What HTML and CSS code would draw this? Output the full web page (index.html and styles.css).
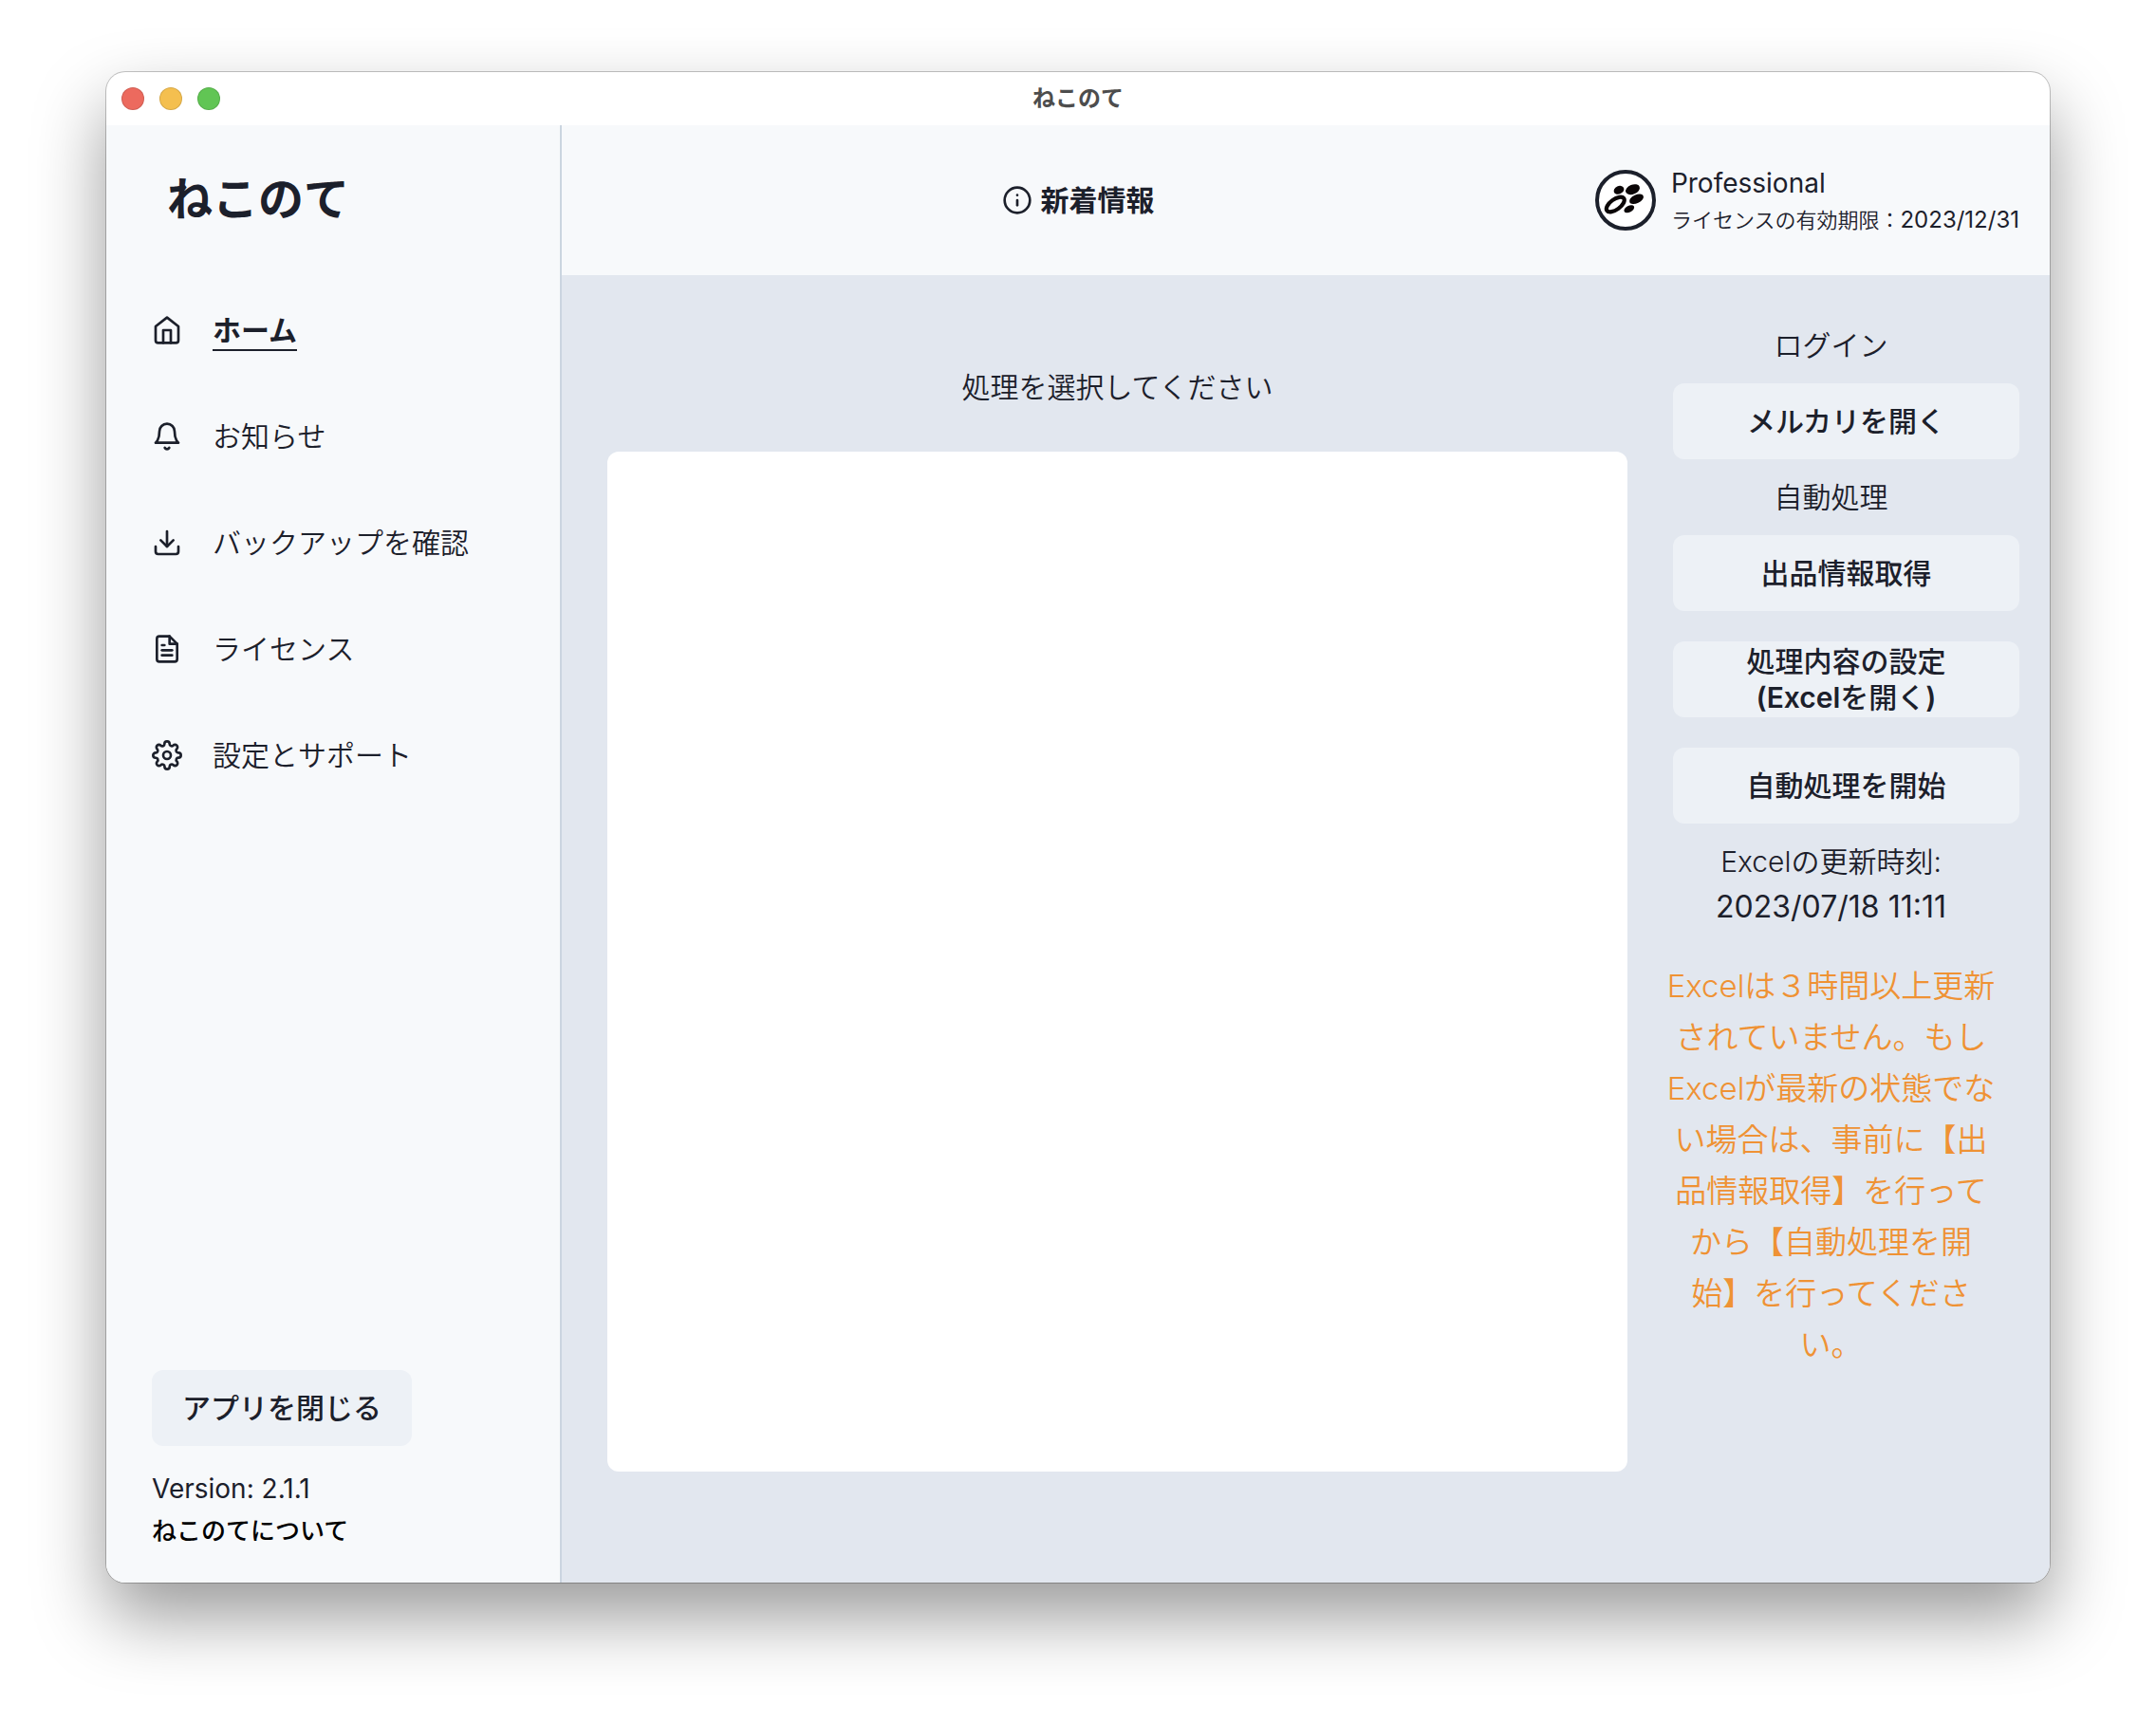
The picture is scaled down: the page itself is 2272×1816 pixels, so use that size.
FILE: index.html
```html
<!DOCTYPE html>
<html lang="ja">
<head>
  <meta charset="utf-8">
  <title>ねこのて</title>
  <link rel="stylesheet" href="styles.css">
</head>
<body>
  <div class="window">
    <div class="titlebar">
      <div class="lights">
        <span class="light light-close"></span>
        <span class="light light-minimize"></span>
        <span class="light light-zoom"></span>
      </div>
      <div class="titlebar-title">ねこのて</div>
    </div>
    <div class="app">
      <div class="sidebar">
        <h1 class="brand">ねこのて</h1>
        <nav class="nav">
          <a class="nav-item nav-item-active" href="#home">
            <svg class="icon" viewBox="0 0 24 24"><path d="M3 9l9-7 9 7v11a2 2 0 0 1-2 2H5a2 2 0 0 1-2-2z"/><path d="M9 22V12h6v10"/></svg>
            <span class="nav-label">ホーム</span>
          </a>
          <a class="nav-item" href="#news">
            <svg class="icon" viewBox="0 0 24 24"><path d="M18 8A6 6 0 0 0 6 8c0 7-3 9-3 9h18s-3-2-3-9"/><path d="M13.73 21a2 2 0 0 1-3.46 0"/></svg>
            <span class="nav-label">お知らせ</span>
          </a>
          <a class="nav-item" href="#backup">
            <svg class="icon" viewBox="0 0 24 24"><path d="M21 15v4a2 2 0 0 1-2 2H5a2 2 0 0 1-2-2v-4"/><path d="M7 10l5 5 5-5"/><path d="M12 15V3"/></svg>
            <span class="nav-label">バックアップを確認</span>
          </a>
          <a class="nav-item" href="#license">
            <svg class="icon" viewBox="0 0 24 24"><path d="M14 2H6a2 2 0 0 0-2 2v16a2 2 0 0 0 2 2h12a2 2 0 0 0 2-2V8z"/><path d="M14 2v6h6"/><path d="M16 13H8"/><path d="M16 17H8"/><path d="M10 9H8"/></svg>
            <span class="nav-label">ライセンス</span>
          </a>
          <a class="nav-item" href="#settings">
            <svg class="icon" viewBox="0 0 24 24"><circle cx="12" cy="12" r="3"/><path d="M19.4 15a1.65 1.65 0 0 0 .33 1.82l.06.06a2 2 0 0 1 0 2.83 2 2 0 0 1-2.83 0l-.06-.06a1.65 1.65 0 0 0-1.82-.33 1.65 1.65 0 0 0-1 1.51V21a2 2 0 0 1-2 2 2 2 0 0 1-2-2v-.09A1.65 1.65 0 0 0 9 19.4a1.65 1.65 0 0 0-1.82.33l-.06.06a2 2 0 0 1-2.83 0 2 2 0 0 1 0-2.83l.06-.06a1.65 1.65 0 0 0 .33-1.82 1.65 1.65 0 0 0-1.51-1H3a2 2 0 0 1-2-2 2 2 0 0 1 2-2h.09A1.65 1.65 0 0 0 4.6 9a1.65 1.65 0 0 0-.33-1.82l-.06-.06a2 2 0 0 1 0-2.83 2 2 0 0 1 2.83 0l.06.06a1.65 1.65 0 0 0 1.82.33H9a1.65 1.65 0 0 0 1-1.51V3a2 2 0 0 1 2-2 2 2 0 0 1 2 2v.09a1.65 1.65 0 0 0 1 1.51 1.65 1.65 0 0 0 1.82-.33l.06-.06a2 2 0 0 1 2.83 0 2 2 0 0 1 0 2.83l-.06.06a1.65 1.65 0 0 0-.33 1.82V9a1.65 1.65 0 0 0 1.51 1H21a2 2 0 0 1 2 2 2 2 0 0 1-2 2h-.09a1.65 1.65 0 0 0-1.51 1z"/></svg>
            <span class="nav-label">設定とサポート</span>
          </a>
        </nav>
        <div class="sidebar-footer">
          <button class="button button-quit" type="button">アプリを閉じる</button>
          <p class="version">Version: 2.1.1</p>
          <a class="about" href="#about">ねこのてについて</a>
        </div>
      </div>
      <div class="content">
        <header class="header">
          <div class="header-center">
            <button class="info" type="button">
              <svg class="icon" viewBox="0 0 24 24"><circle cx="12" cy="12" r="10"/><path d="M12 16v-4"/><path d="M12 8h.01"/></svg>
              <span>新着情報</span>
            </button>
          </div>
          <div class="account">
            <svg class="avatar" viewBox="0 0 64 64">
              <circle cx="32" cy="32" r="30" fill="#fff" stroke="#1c202b" stroke-width="4"/>
              <g fill="#0b0607">
                <ellipse cx="25" cy="21.3" rx="5.6" ry="4.2" transform="rotate(-25 25 21.3)"/>
                <ellipse cx="39.5" cy="20.7" rx="7.8" ry="5" transform="rotate(-22 39.5 20.7)"/>
                <ellipse cx="43.5" cy="30.8" rx="8" ry="4.4" transform="rotate(-25 43.5 30.8)"/>
                <ellipse cx="35.8" cy="41.3" rx="5.8" ry="3.4" transform="rotate(-28 35.8 41.3)"/>
              </g>
              <ellipse cx="21.3" cy="36.5" rx="11" ry="5.4" fill="#fff" stroke="#0b0607" stroke-width="4.2" transform="rotate(-36 21.3 36.5)"/>
            </svg>
            <div class="account-text">
              <p class="plan">Professional</p>
              <p class="expiry">ライセンスの有効期限：<span class="expiry-date">2023/12/31</span></p>
            </div>
          </div>
        </header>
        <main class="main">
          <section class="stage">
            <p class="prompt">処理を選択してください</p>
            <div class="panel"></div>
          </section>
          <aside class="actions">
            <p class="caption">ログイン</p>
            <button class="button" type="button">メルカリを開く</button>
            <p class="caption">自動処理</p>
            <div class="button-group">
              <button class="button" type="button">出品情報取得</button>
              <button class="button" type="button">処理内容の設定<br><span class="strong">(Excel</span>を開く<span class="strong">)</span></button>
              <button class="button" type="button">自動処理を開始</button>
            </div>
            <div class="caption">
              <p>Excelの更新時刻:</p>
              <p class="updated">2023/07/18 11:11</p>
            </div>
            <p class="warning">Excelは３時間以上更新されていません。もしExcelが最新の状態でない場合は、事前に【出品情報取得】を行ってから【自動処理を開始】を行ってください。</p>
          </aside>
        </main>
      </div>
    </div>
  </div>
</body>
</html>
```
FILE: styles.css
```css
* {
  box-sizing: border-box;
}

body {
  display: flex;
  min-height: 100vh;
  margin: 0;
  padding: 76px 112px 148px;
  background: #fff;
  color: #1c202b;
  font-family: Inter, "Noto Sans CJK JP", sans-serif;
  font-size: 30px;
  font-weight: 350;
  line-height: 48px;
}

p,
h1 {
  margin: 0;
}

a {
  color: inherit;
  text-decoration: none;
}

button {
  border: 0;
  color: inherit;
  font: inherit;
  cursor: pointer;
}

.window {
  display: flex;
  flex: 1;
  flex-direction: column;
  min-width: 0;
  overflow: hidden;
  border-radius: 20px;
  background: #fff;
  box-shadow: 0 0 0 1px rgba(0, 0, 0, 0.22), 0 36px 76px rgba(0, 0, 0, 0.4);
}

.titlebar {
  display: grid;
  grid-template-columns: 1fr auto 1fr;
  align-items: center;
  height: 56px;
  padding: 0 16px;
}

.lights {
  display: flex;
  gap: 16px;
}

.light {
  width: 24px;
  height: 24px;
  border: 1px solid rgba(0, 0, 0, 0.12);
  border-radius: 50%;
}

.light-close {
  background: #ec6a5e;
}

.light-minimize {
  background: #f4bf4f;
}

.light-zoom {
  background: #61c554;
}

.titlebar-title {
  color: #4d4d4d;
  font-size: 24px;
  font-weight: 700;
}

.app {
  display: flex;
  flex: 1;
}

.sidebar {
  display: flex;
  flex: none;
  flex-direction: column;
  width: 480px;
  padding: 44px 48px 30px;
  border-right: 2px solid #cbd5e0;
  background: #f7f9fb;
}

.brand {
  padding-left: 16px;
  font-size: 48px;
  font-weight: 700;
  line-height: 68px;
}

.nav {
  display: flex;
  flex-direction: column;
  gap: 64px;
  margin-top: 80px;
}

.nav-item {
  display: flex;
  align-items: center;
  gap: 32px;
  height: 48px;
}

.icon {
  flex: none;
  width: 32px;
  height: 32px;
  fill: none;
  stroke: currentColor;
  stroke-width: 2;
  stroke-linecap: round;
  stroke-linejoin: round;
}

.nav-item-active .nav-label {
  height: 44px;
  border-bottom: 2px solid currentColor;
  font-weight: 700;
  line-height: 44px;
}

.sidebar-footer {
  display: flex;
  flex-direction: column;
  align-items: flex-start;
  margin-top: auto;
}

.button {
  width: 100%;
  height: 80px;
  padding: 0 32px;
  border-radius: 12px;
  background: #edf1f6;
  font-weight: 500;
  line-height: 38px;
}

.button-quit {
  width: auto;
}

.strong {
  font-weight: 600;
}

.version {
  margin-top: 24px;
  font-size: 28px;
  font-weight: 400;
  line-height: 42px;
}

.about {
  color: #000;
  font-size: 26px;
  font-weight: 500;
}

.content {
  display: flex;
  flex: 1;
  flex-direction: column;
  min-width: 0;
}

.header {
  display: flex;
  align-items: center;
  height: 158px;
  padding-right: 32px;
  background: #f7f9fb;
}

.header-center {
  display: flex;
  flex: 1;
  justify-content: center;
}

.info {
  display: flex;
  align-items: center;
  gap: 8px;
  padding: 0;
  background: none;
  font-weight: 700;
}

.account {
  display: flex;
  align-items: center;
  gap: 16px;
}

.avatar {
  width: 64px;
  height: 64px;
}

.plan {
  font-size: 28px;
  font-weight: 400;
  line-height: 42px;
}

.expiry {
  font-size: 22px;
  line-height: 36px;
}

.expiry-date {
  font-size: 24px;
  font-weight: 400;
}

.main {
  display: grid;
  flex: 1;
  grid-template-columns: minmax(0, 1fr) 397px;
  background: #e2e7ef;
}

.stage {
  padding: 94px 48px 0;
}

.prompt {
  text-align: center;
}

.panel {
  aspect-ratio: 1;
  margin-top: 44px;
  border-radius: 12px;
  background: #fff;
}

.actions {
  padding: 50px 32px 48px 0;
}

.caption,
.warning {
  margin: 16px 16px 16px -16px;
  text-align: center;
}

.caption:first-child {
  margin-top: 0;
}

.updated {
  font-size: 32px;
  font-weight: 400;
}

.button-group {
  display: flex;
  flex-direction: column;
  gap: 32px;
}

.warning {
  margin-top: 32px;
  padding: 0 6px;
  color: #ef9234;
  font-size: 33px;
  line-height: 54px;
  text-spacing-trim: space-all;
}
```
